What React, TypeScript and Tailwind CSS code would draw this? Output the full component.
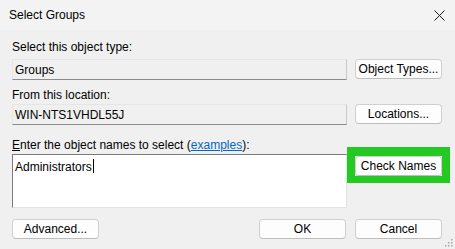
import React from "react";

const font = { fontFamily: '"Segoe UI", "Liberation Sans", Arial, sans-serif' };

function WinButton({ children, className = "" }: { children: React.ReactNode; className?: string }) {
  return (
    <button
      type="button"
      className={`h-[20px] w-[87px] shrink-0 rounded-[4px] border border-[#d0d0d0] border-b-[#bdbdbd] bg-[#fdfdfd] text-[12px] leading-none text-black ${className}`}
    >
      {children}
    </button>
  );
}

function ReadOnlyBox({ value }: { value: string }) {
  return (
    <div className="flex h-[21px] w-[335px] shrink-0 items-center border border-[#e6e6e6] border-b-[#8c8c8c] border-r-[#c8c8c8] bg-[#f0f0f0] pl-[2px] text-[12px] text-black">
      {value}
    </div>
  );
}

export default function App() {
  return (
    <div className="h-[249px] w-[455px] overflow-hidden bg-[#f0f0f0] text-black" style={font}>
      {/* title bar */}
      <div className="flex h-[30px] items-center justify-between bg-[#f3f3f3] pl-[9px] pr-[9px]">
        <span className="text-[12px]">Select Groups</span>
        <svg width="11" height="11" viewBox="0 0 11 11" className="mr-[1px]">
          <path d="M0.5 0.5 L10.5 10.5 M10.5 0.5 L0.5 10.5" stroke="#1a1a1a" strokeWidth="1" />
        </svg>
      </div>

      <div className="relative px-[12px]">
        <div className="mt-[9px] h-[16px] text-[12px] leading-[16px]">Select this object type:</div>
        <div className="mt-[4px] flex gap-[8px]">
          <ReadOnlyBox value="Groups" />
          <WinButton>Object Types...</WinButton>
        </div>

        <div className="mt-[7px] h-[16px] text-[12px] leading-[16px]">From this location:</div>
        <div className="mt-[1px] flex gap-[8px]">
          <ReadOnlyBox value="WIN-NTS1VHDL55J" />
          <WinButton>Locations...</WinButton>
        </div>

        <div className="mt-[12px] h-[16px] text-[12px] leading-[16px]">
          <span className="underline">E</span>nter the object names to select (
          <span className="text-[#0066cc] underline">examples</span>):
        </div>
        <div className="mt-[1px] flex gap-[8px]">
          <div className="h-[54px] w-[335px] shrink-0 border border-[#e3e3e3] border-l-[#7a7a7a] border-t-[#7a7a7a] bg-white pl-[2px] pt-[2px] text-[12px] leading-[16px]">
            Administrators
            <span className="ml-[1px] inline-block h-[14px] w-px translate-y-[2px] bg-black" />
          </div>
          {/* green highlight around Check Names */}
          <div className="-mx-[8px] -mt-[7px] shrink-0 self-start border-[8px] border-t-[9px] border-b-[7px] border-[#24c924]">
            <WinButton className="block">Check Names</WinButton>
          </div>
        </div>

        <div className="mt-[11px] flex items-center">
          <WinButton>Advanced...</WinButton>
          <div className="ml-auto flex gap-[9px] pr-[1px]">
            <WinButton className="w-[72px]">OK</WinButton>
            <WinButton className="w-[72px]">Cancel</WinButton>
          </div>
        </div>

        {/* resize grip */}
        <svg width="8" height="8" viewBox="0 0 8 8" className="absolute bottom-[-8px] right-[2px]">
          <rect x="6" y="0" width="1.5" height="1.5" fill="#a8a8a8" />
          <rect x="3" y="3" width="1.5" height="1.5" fill="#a8a8a8" />
          <rect x="6" y="3" width="1.5" height="1.5" fill="#a8a8a8" />
          <rect x="0" y="6" width="1.5" height="1.5" fill="#a8a8a8" />
          <rect x="3" y="6" width="1.5" height="1.5" fill="#a8a8a8" />
          <rect x="6" y="6" width="1.5" height="1.5" fill="#a8a8a8" />
        </svg>
      </div>
    </div>
  );
}
